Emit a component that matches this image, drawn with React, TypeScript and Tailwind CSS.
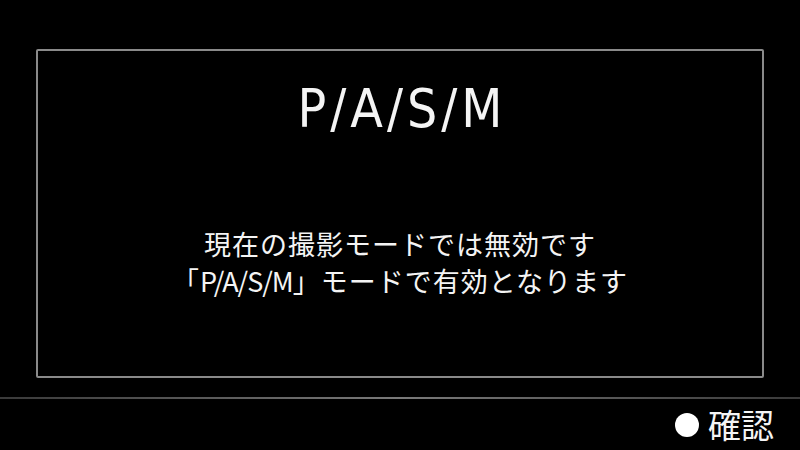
import React from "react";

const jp = {
  fontFamily: '"Noto Sans CJK JP", "Noto Sans", sans-serif',
};

const App = () => {
  return (
    <div className="w-[800px] h-[450px] bg-black text-white overflow-hidden flex flex-col">
      <div className="px-[36px] pt-[49px]">
        <div className="h-[329px] border-2 border-[#8a8a8a] rounded-[2px] flex flex-col items-center">
          <div className="mt-[31px] pl-[4px] text-[53px] leading-[54px] tracking-[4px] font-stretch-condensed font-['DejaVu_Sans',sans-serif] text-[#f4f4f4] whitespace-nowrap">
            P/A/S/M
          </div>
          <div
            className="mt-[89px] text-[27px] leading-[37px] tracking-[1px] text-center text-[#f4f4f4]"
            style={jp}
          >
            <p>現在の撮影モードでは無効です</p>
            <p>
              「<span className="tracking-[-1px]">P/A/S/M</span>」モードで有効となります
            </p>
          </div>
        </div>
      </div>
      <div className="mt-[19px] h-[2px] bg-gradient-to-r from-[#3a3a3a] via-[#7a7a7a] to-[#3a3a3a]" />
      <div className="flex-1 flex items-center justify-end pr-[26px] gap-[9px]">
        <span className="w-[24px] h-[24px] rounded-full bg-white" />
        <span className="text-[33px] leading-none text-[#f4f4f4]" style={jp}>
          確認
        </span>
      </div>
    </div>
  );
};

export default App;
